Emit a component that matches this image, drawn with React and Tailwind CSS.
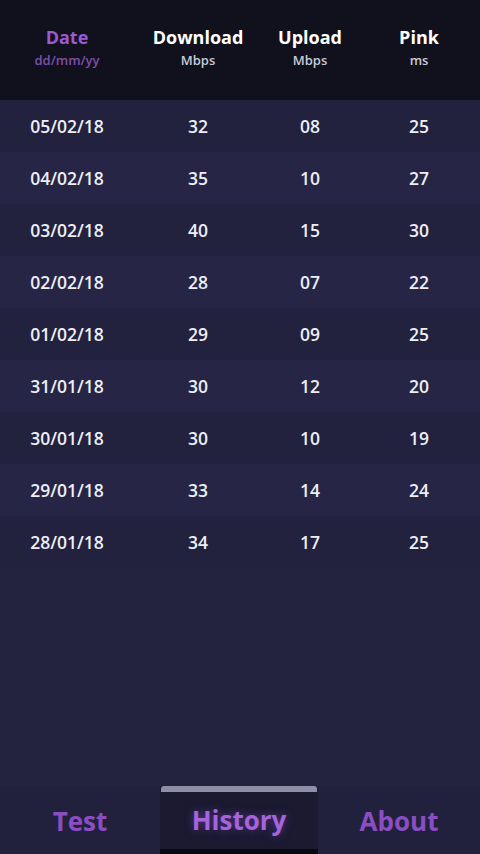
const rows = [
  ["05/02/18", "32", "08", "25"],
  ["04/02/18", "35", "10", "27"],
  ["03/02/18", "40", "15", "30"],
  ["02/02/18", "28", "07", "22"],
  ["01/02/18", "29", "09", "25"],
  ["31/01/18", "30", "12", "20"],
  ["30/01/18", "30", "10", "19"],
  ["29/01/18", "33", "14", "24"],
  ["28/01/18", "34", "17", "25"],
];

const cols = "grid grid-cols-[134px_128px_96px_122px]";

export default function App() {
  return (
    <div
      className="w-[480px] h-[854px] flex flex-col bg-[#23223f] overflow-hidden"
      style={{ fontFamily: '"Open Sans", "DejaVu Sans", sans-serif' }}
    >
      <div className={`${cols} h-[100px] bg-[#11111e] pt-[26px] text-center`}>
        <div>
          <div className="text-[18px] font-bold text-[#9a5ad0] leading-[22px]">Date</div>
          <div className="text-[13px] font-semibold text-[#7d4fa8] mt-[3px]">dd/mm/yy</div>
        </div>
        <div>
          <div className="text-[18px] font-bold text-white leading-[22px]">Download</div>
          <div className="text-[13px] font-semibold text-[#c9c9d6] mt-[3px]">Mbps</div>
        </div>
        <div>
          <div className="text-[18px] font-bold text-white leading-[22px]">Upload</div>
          <div className="text-[13px] font-semibold text-[#c9c9d6] mt-[3px]">Mbps</div>
        </div>
        <div>
          <div className="text-[18px] font-bold text-white leading-[22px]">Pink</div>
          <div className="text-[13px] font-semibold text-[#c9c9d6] mt-[3px]">ms</div>
        </div>
      </div>

      <div className="flex-1">
        {rows.map((r, i) => (
          <div
            key={r[0]}
            className={`${cols} h-[52px] items-center text-center text-[17.5px] font-semibold text-[#eeeef4] ${
              i % 2 === 0 ? "bg-[#22213e]" : "bg-[#262545]"
            }`}
          >
            {r.map((c, j) => (
              <div key={j}>{c}</div>
            ))}
          </div>
        ))}
      </div>

      <div className="h-[68px] flex items-stretch bg-[#22213d] text-[26px] font-bold">
        <div className="w-[160px] flex items-center justify-center text-[#8a4ec2] pt-[2px]">Test</div>
        <div className="w-[158px] flex flex-col bg-[#1b1a31]">
          <div className="h-[6px] mx-[1px] rounded-t-[3px] bg-[#8e8ea6]" />
          <div className="flex-1 flex items-center justify-center text-[#a564dc] [text-shadow:0_0_8px_rgba(150,80,210,0.5)]">
            History
          </div>
          <div className="h-[5px] bg-[#08080f]" />
        </div>
        <div className="flex-1 flex items-center justify-center text-[#8a4ec2] pt-[2px]">About</div>
      </div>
    </div>
  );
}
